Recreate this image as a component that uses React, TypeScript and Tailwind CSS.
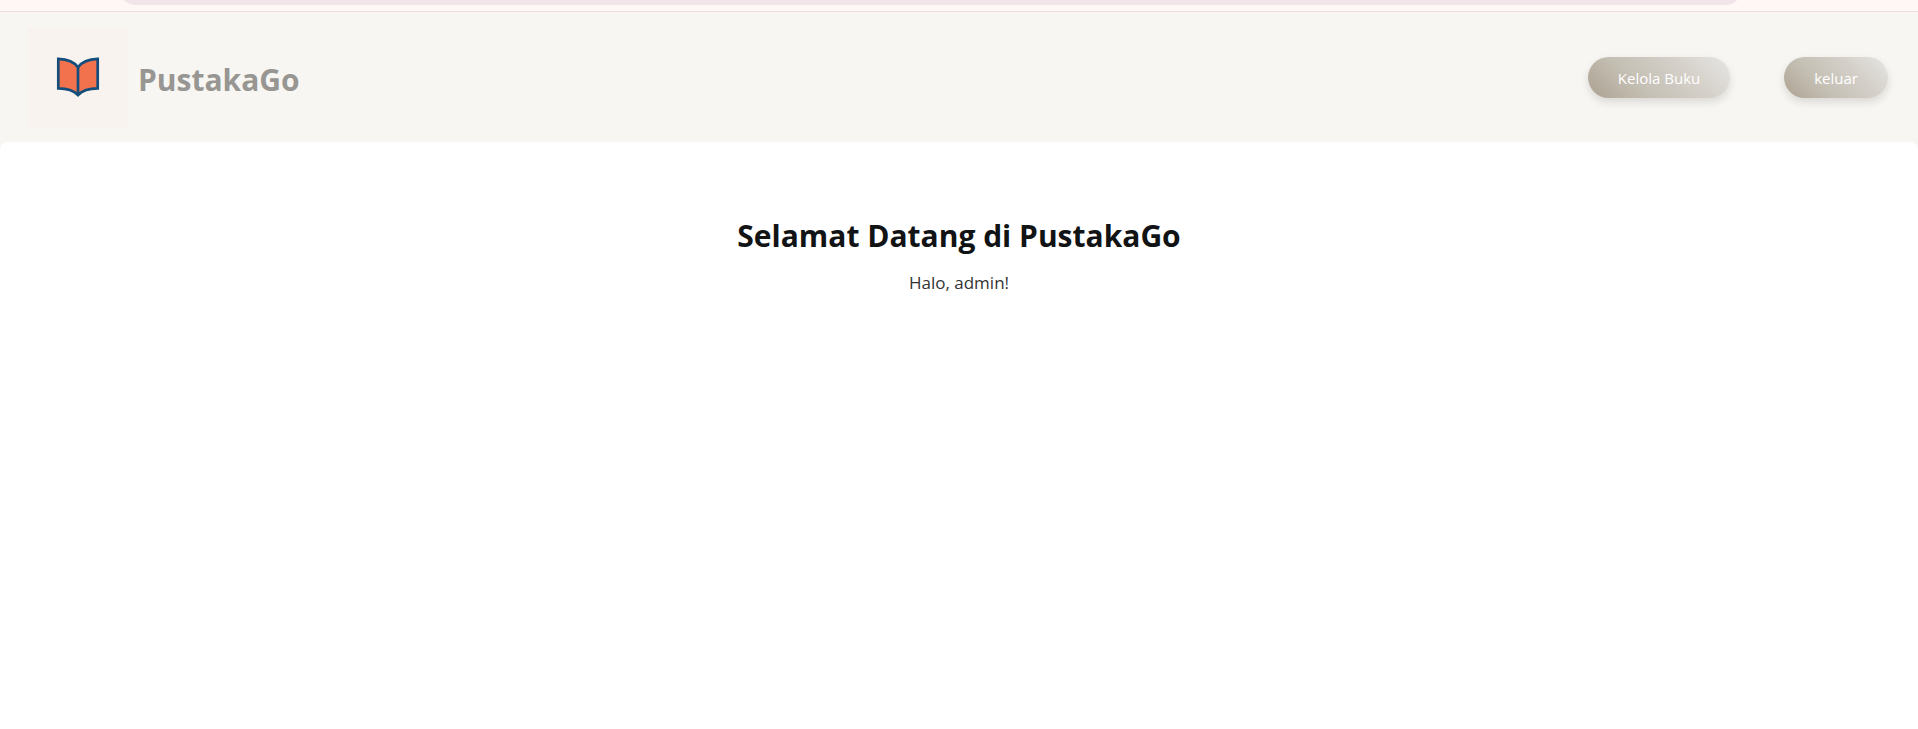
const pill =
  "flex h-[41px] items-center rounded-full bg-linear-[45deg,#aca192,#c5c0b4_35%,#d3cec7_65%,#e6e6e3] px-[30px] pt-0.5 text-[15px] text-white shadow-[0_4px_8px_rgba(0,0,0,0.12)]";

function Logo() {
  return (
    <span className="flex size-[100px] items-center justify-center bg-[#f8f3ee]">
      <svg viewBox="0 0 100 100" className="size-full" role="img" aria-label="PustakaGo">
        <path
          d="M30.3 31.8 C38 32 46 34.500 50 40.300 C54 34.500 62 32 69.700 31.800 V61.300 C62 61.300 54.500 63.200 50 68 C45.500 63.200 38 61.300 30.300 61.300 Z"
          fill="#f2724e"
          stroke="#124d7c"
          strokeWidth="2.700"
          strokeLinejoin="miter"
        />
        <path d="M50 40 V68" stroke="#124d7c" strokeWidth="2.700" />
      </svg>
    </span>
  );
}

export default function App() {
  return (
    <div className="flex min-h-screen flex-col bg-[#f7f6f2] font-['Segoe_UI','Open_Sans',sans-serif]">
      <div className="h-3 border-b border-[#f0dcdf] bg-[#fff7f5] pr-[175px] pl-[118px]">
        <div className="h-[5px] overflow-hidden">
          <div className="-mt-[31px] h-9 rounded-full bg-[#f2e5e9]" />
        </div>
      </div>
      <header className="flex items-center justify-between pt-[15px] pr-[30px] pb-[15px] pl-7">
        <a href="#" className="flex items-center gap-2.5 text-[30px] font-bold text-[#989692]">
          <Logo />
          <span className="pt-1">PustakaGo</span>
        </a>
        <nav className="flex items-center gap-[54px]">
          <a href="#kelola" className={pill}>Kelola Buku</a>
          <button type="button" className={pill}>keluar</button>
        </nav>
      </header>
      <main className="flex grow flex-col items-center gap-2 rounded-t-lg bg-white pt-[71px]">
        <h1 className="text-[30px] leading-[46px] font-bold text-[#111315]">Selamat Datang di PustakaGo</h1>
        <p className="text-[17px] leading-8 text-[#333]">Halo, admin!</p>
      </main>
    </div>
  );
}
